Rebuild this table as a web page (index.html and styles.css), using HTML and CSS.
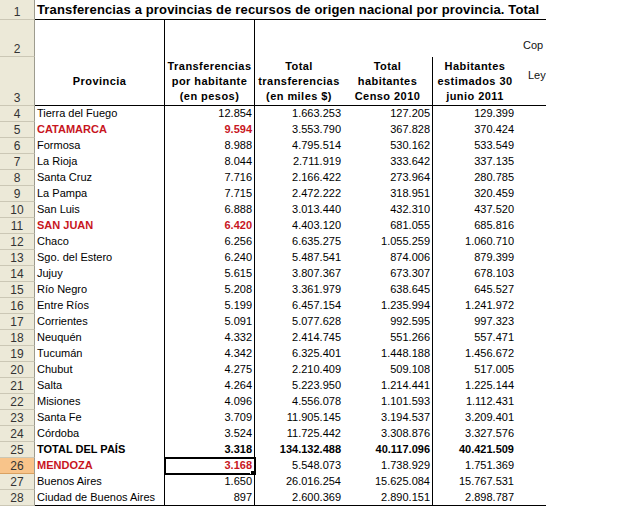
FILE: index.html
```html
<!DOCTYPE html>
<html lang="es">
<head>
<meta charset="utf-8">
<title>Transferencias</title>
<link rel="stylesheet" href="styles.css">
</head>
<body>
<div class="sheet">
  <div class="row r1">
    <div class="rh">1</div>
    <div class="title">Transferencias a provincias de recursos de origen nacional por provincia. Total</div>
  </div>
  <div class="head">
    <div class="rh">2</div>
    <div class="vr"></div>
    <div class="vr"></div>
    <div></div>
    <div></div>
    <div></div>
    <div class="side side-top">Cop</div>

    <div class="rh">3</div>
    <div class="hc vr">Provincia</div>
    <div class="hc vr">Transferencias<br>por habitante<br>(en pesos)</div>
    <div class="hc">Total<br>transferencias<br>(en miles $)</div>
    <div class="hc vr">Total<br>habitantes<br>Censo 2010</div>
    <div class="hc">Habitantes<br>estimados 30<br>junio 2011</div>
    <div class="side side-low">Ley</div>
  </div>

  <div class="row"><div class="rh">4</div><div class="c name">Tierra del Fuego</div><div class="c num vr">12.854</div><div class="c num">1.663.253</div><div class="c num vr">127.205</div><div class="c num n6">129.399</div><div></div></div>
  <div class="row"><div class="rh">5</div><div class="c name red">CATAMARCA</div><div class="c num vr red">9.594</div><div class="c num">3.553.790</div><div class="c num vr">367.828</div><div class="c num n6">370.424</div><div></div></div>
  <div class="row"><div class="rh">6</div><div class="c name">Formosa</div><div class="c num vr">8.988</div><div class="c num">4.795.514</div><div class="c num vr">530.162</div><div class="c num n6">533.549</div><div></div></div>
  <div class="row"><div class="rh">7</div><div class="c name">La Rioja</div><div class="c num vr">8.044</div><div class="c num">2.711.919</div><div class="c num vr">333.642</div><div class="c num n6">337.135</div><div></div></div>
  <div class="row"><div class="rh">8</div><div class="c name">Santa Cruz</div><div class="c num vr">7.716</div><div class="c num">2.166.422</div><div class="c num vr">273.964</div><div class="c num n6">280.785</div><div></div></div>
  <div class="row"><div class="rh">9</div><div class="c name">La Pampa</div><div class="c num vr">7.715</div><div class="c num">2.472.222</div><div class="c num vr">318.951</div><div class="c num n6">320.459</div><div></div></div>
  <div class="row"><div class="rh">10</div><div class="c name">San Luis</div><div class="c num vr">6.888</div><div class="c num">3.013.440</div><div class="c num vr">432.310</div><div class="c num n6">437.520</div><div></div></div>
  <div class="row"><div class="rh">11</div><div class="c name red">SAN JUAN</div><div class="c num vr red">6.420</div><div class="c num">4.403.120</div><div class="c num vr">681.055</div><div class="c num n6">685.816</div><div></div></div>
  <div class="row"><div class="rh">12</div><div class="c name">Chaco</div><div class="c num vr">6.256</div><div class="c num">6.635.275</div><div class="c num vr">1.055.259</div><div class="c num n6">1.060.710</div><div></div></div>
  <div class="row"><div class="rh">13</div><div class="c name">Sgo. del Estero</div><div class="c num vr">6.240</div><div class="c num">5.487.541</div><div class="c num vr">874.006</div><div class="c num n6">879.399</div><div></div></div>
  <div class="row"><div class="rh">14</div><div class="c name">Jujuy</div><div class="c num vr">5.615</div><div class="c num">3.807.367</div><div class="c num vr">673.307</div><div class="c num n6">678.103</div><div></div></div>
  <div class="row"><div class="rh">15</div><div class="c name">Río Negro</div><div class="c num vr">5.208</div><div class="c num">3.361.979</div><div class="c num vr">638.645</div><div class="c num n6">645.527</div><div></div></div>
  <div class="row"><div class="rh">16</div><div class="c name">Entre Ríos</div><div class="c num vr">5.199</div><div class="c num">6.457.154</div><div class="c num vr">1.235.994</div><div class="c num n6">1.241.972</div><div></div></div>
  <div class="row"><div class="rh">17</div><div class="c name">Corrientes</div><div class="c num vr">5.091</div><div class="c num">5.077.628</div><div class="c num vr">992.595</div><div class="c num n6">997.323</div><div></div></div>
  <div class="row"><div class="rh">18</div><div class="c name">Neuquén</div><div class="c num vr">4.332</div><div class="c num">2.414.745</div><div class="c num vr">551.266</div><div class="c num n6">557.471</div><div></div></div>
  <div class="row"><div class="rh">19</div><div class="c name">Tucumán</div><div class="c num vr">4.342</div><div class="c num">6.325.401</div><div class="c num vr">1.448.188</div><div class="c num n6">1.456.672</div><div></div></div>
  <div class="row"><div class="rh">20</div><div class="c name">Chubut</div><div class="c num vr">4.275</div><div class="c num">2.210.409</div><div class="c num vr">509.108</div><div class="c num n6">517.005</div><div></div></div>
  <div class="row"><div class="rh">21</div><div class="c name">Salta</div><div class="c num vr">4.264</div><div class="c num">5.223.950</div><div class="c num vr">1.214.441</div><div class="c num n6">1.225.144</div><div></div></div>
  <div class="row"><div class="rh">22</div><div class="c name">Misiones</div><div class="c num vr">4.096</div><div class="c num">4.556.078</div><div class="c num vr">1.101.593</div><div class="c num n6">1.112.431</div><div></div></div>
  <div class="row"><div class="rh">23</div><div class="c name">Santa Fe</div><div class="c num vr">3.709</div><div class="c num">11.905.145</div><div class="c num vr">3.194.537</div><div class="c num n6">3.209.401</div><div></div></div>
  <div class="row"><div class="rh">24</div><div class="c name">Córdoba</div><div class="c num vr">3.524</div><div class="c num">11.725.442</div><div class="c num vr">3.308.876</div><div class="c num n6">3.327.576</div><div></div></div>
  <div class="row total"><div class="rh">25</div><div class="c name">TOTAL DEL PAÍS</div><div class="c num vr">3.318</div><div class="c num">134.132.488</div><div class="c num vr">40.117.096</div><div class="c num n6">40.421.509</div><div></div></div>
  <div class="row"><div class="rh active">26</div><div class="c name red">MENDOZA</div><div class="c num vr red sel">3.168</div><div class="c num">5.548.073</div><div class="c num vr">1.738.929</div><div class="c num n6">1.751.369</div><div></div></div>
  <div class="row"><div class="rh">27</div><div class="c name">Buenos Aires</div><div class="c num vr">1.650</div><div class="c num">26.016.254</div><div class="c num vr">15.625.084</div><div class="c num n6">15.767.531</div><div></div></div>
  <div class="row last"><div class="rh">28</div><div class="c name">Ciudad de Buenos Aires</div><div class="c num vr">897</div><div class="c num">2.600.369</div><div class="c num vr">2.890.151</div><div class="c num n6">2.898.787</div><div></div></div>
</div>
</body>
</html>
```
FILE: styles.css
```css
* { box-sizing: border-box; }

body {
  margin: 0;
  background: #fff;
  font-family: "Liberation Sans", Arial, sans-serif;
  font-size: 11px;
  color: #000;
}

.sheet {
  width: 546px;
}

.row,
.head {
  display: grid;
  grid-template-columns: 35px 130px 90px 88px 90px 84px 29px;
}

.row { height: 16px; }
.r1 { height: 20px; }
.head { grid-template-rows: 37px 49px; }

.rh {
  background: #ECE9D8;
  border-right: 1px solid #9D9B8E;
  border-bottom: 1px solid #CBC7B5;
  color: #333;
  font-size: 12px;
  line-height: 14px;
  display: flex;
  align-items: flex-end;
  justify-content: center;
}

.rh.active {
  background: #F8C48A;
  border-bottom-color: #D9A161;
}

.title {
  grid-column: 2 / 8;
  border-bottom: 1px solid #000;
  font-weight: bold;
  font-size: 13px;
  letter-spacing: 0.15px;
  line-height: 19px;
  padding-left: 2px;
  white-space: nowrap;
  overflow: hidden;
}

.vr { border-right: 1px solid #000; }

.hc {
  display: flex;
  align-items: center;
  justify-content: center;
  text-align: center;
  font-weight: bold;
  letter-spacing: 0.45px;
  line-height: 15px;
  border-bottom: 1px solid #000;
  white-space: nowrap;
  overflow: hidden;
  padding-top: 1px;
}

.side {
  white-space: nowrap;
  overflow: hidden;
  line-height: 15px;
  color: #111;
}

.side-top { padding: 18px 0 0 6px; }
.side-low {
  padding: 11px 0 0 11px;
  border-bottom: 1px solid #000;
}

.c {
  white-space: nowrap;
  overflow: hidden;
  line-height: 15px;
}

.name {
  padding-left: 2px;
  border-right: 1px solid #000;
}

.num {
  text-align: right;
  padding-right: 2px;
}

.n6 { padding-right: 3px; }

.red {
  color: #C8161E;
  font-weight: bold;
}

.total .c { font-weight: bold; }

.last > div:not(.rh) { border-bottom: 1px solid #000; }

.sel {
  position: relative;
  outline: 2px solid #000;
  outline-offset: -1px;
}

.sel::after {
  content: "";
  position: absolute;
  right: -4px;
  bottom: -4px;
  width: 6px;
  height: 6px;
  background: #000;
  border: 1px solid #fff;
}
```
